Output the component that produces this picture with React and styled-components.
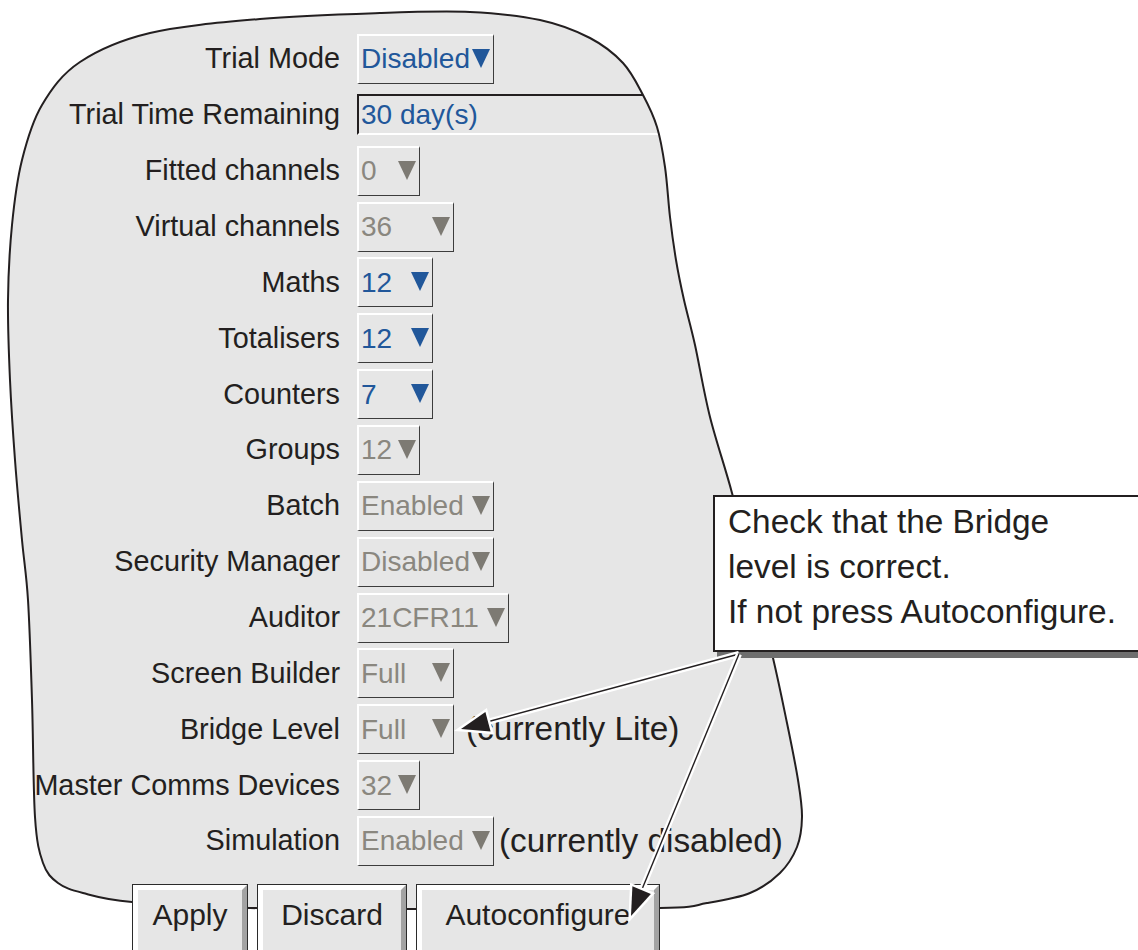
import React from "react";
import styled, { createGlobalStyle } from "styled-components";

const INK = "#231f20";
const BLUE = "#21579a";
const GRAY = "#8a877f";
const GRAY_TRI = "#7d7a73";
const PANEL = "#e6e6e6";

const Global = createGlobalStyle`
  html, body { margin: 0; padding: 0; background: #fff; }
  body { font-family: "Liberation Sans", Arial, Helvetica, sans-serif; color: ${INK}; }
`;

const Page = styled.div`
  position: relative;
  width: 1138px;
  height: 950px;
  overflow: hidden;
  background: #fff;
`;

const Layer = styled.svg`
  position: absolute;
  left: 0;
  top: 0;
  width: 1138px;
  height: 950px;
  pointer-events: none;
  z-index: ${(p) => p.$z};
`;

const Form = styled.div`
  position: relative;
  z-index: 1;
  display: grid;
  grid-template-columns: 340px 1fr;
  grid-auto-rows: 55.86px;
  column-gap: 17px;
  align-items: center;
  padding-top: 31px;
`;

const Label = styled.div`
  text-align: right;
  font-size: 28.8px;
  white-space: nowrap;
  color: ${INK};
`;

const Cell = styled.div`
  display: flex;
  align-items: center;
  height: 100%;
`;

const Select = styled.div`
  box-sizing: border-box;
  width: ${(p) => p.$w}px;
  height: 50px;
  display: flex;
  align-items: center;
  justify-content: space-between;
  padding: 0 3px 0 2px;
  border-top: 2px solid #fff;
  border-left: 2px solid #fff;
  border-right: 1px solid #3c3c3c;
  border-bottom: 1px solid #3c3c3c;
  background: ${PANEL};
  font-size: 28px;
  white-space: nowrap;
  color: ${(p) => (p.$tone === "blue" ? BLUE : GRAY)};
`;

const Arrow = styled.span`
  flex: none;
  width: 0;
  height: 0;
  margin-top: -2px;
  border-left: 9px solid transparent;
  border-right: 9px solid transparent;
  border-top: 19px solid ${(p) => (p.$tone === "blue" ? BLUE : GRAY_TRI)};
`;

const Field = styled.div`
  box-sizing: border-box;
  width: 345px;
  height: 41px;
  display: flex;
  align-items: center;
  padding-left: 2px;
  border-top: 2px solid ${INK};
  border-left: 2px solid ${INK};
  border-bottom: 2px solid #fff;
  background: ${PANEL};
  font-size: 28px;
  color: ${BLUE};
  white-space: nowrap;
`;

const Note = styled.span`
  margin-left: ${(p) => p.$gap}px;
  font-size: 33.4px;
  white-space: nowrap;
  color: ${INK};
`;

const ButtonBar = styled.div`
  position: relative;
  z-index: 3;
  display: flex;
  gap: 11px;
  margin-top: 16px;
  padding-left: 133px;
`;

const Button = styled.div`
  box-sizing: border-box;
  width: ${(p) => p.$w}px;
  height: 72px;
  flex: none;
  display: flex;
  justify-content: center;
  padding-top: 7px;
  border: 5px solid;
  border-color: #fff #a3a3a3 #a3a3a3 #fff;
  outline: 1px solid #2b2b2b;
  background: ${PANEL};
  font-size: 30px;
  line-height: 36px;
  color: ${INK};
`;

const Callout = styled.div`
  position: absolute;
  z-index: 4;
  left: 713px;
  top: 495px;
  width: 440px;
  box-sizing: border-box;
  height: 157px;
  padding: 2px 0 0 13px;
  border: 2px solid ${INK};
  background: #fff;
  box-shadow: 4px 6px 0 #6e6e6e;
  font-size: 33.4px;
  line-height: 45px;
  color: ${INK};
`;

const rows = [
  { label: "Trial Mode", value: "Disabled", w: 137, tone: "blue" },
  { label: "Trial Time Remaining", field: true, value: "30 day(s)" },
  { label: "Fitted channels", value: "0", w: 63, tone: "gray" },
  { label: "Virtual channels", value: "36", w: 97, tone: "gray" },
  { label: "Maths", value: "12", w: 76, tone: "blue" },
  { label: "Totalisers", value: "12", w: 76, tone: "blue" },
  { label: "Counters", value: "7", w: 76, tone: "blue" },
  { label: "Groups", value: "12", w: 63, tone: "gray" },
  { label: "Batch", value: "Enabled", w: 137, tone: "gray" },
  { label: "Security Manager", value: "Disabled", w: 137, tone: "gray" },
  { label: "Auditor", value: "21CFR11", w: 152, tone: "gray" },
  { label: "Screen Builder", value: "Full", w: 97, tone: "gray" },
  { label: "Bridge Level", value: "Full", w: 97, tone: "gray", note: "(currently Lite)", gap: 12 },
  { label: "Master Comms Devices", value: "32", w: 63, tone: "gray" },
  { label: "Simulation", value: "Enabled", w: 137, tone: "gray", note: "(currently disabled)", gap: 5 },
];

const blobPts = [
  [8, 300], [12, 225], [22, 160], [42, 105], [80, 62], [150, 33], [260, 19], [380, 13],
  [470, 12], [540, 20], [590, 38], [623, 63], [643, 95], [657, 127], [665, 167], [670, 217], [676, 260],
  [684, 300], [695, 345], [710, 417], [732, 493], [752, 575], [773, 658], [787, 723],
  [798, 780], [802, 817], [797, 847], [780, 873], [750, 893], [707, 903], [660, 908],
  [450, 909], [250, 908], [132, 902], [83, 893], [58, 883], [43, 863], [35, 817],
  [32, 700], [28, 600], [22, 540], [15, 460], [10, 380],
];

function smoothClosed(pts) {
  const n = pts.length;
  const f = (v) => v.toFixed(1);
  let d = `M${f(pts[0][0])} ${f(pts[0][1])}`;
  for (let i = 0; i < n; i++) {
    const p0 = pts[(i - 1 + n) % n];
    const p1 = pts[i];
    const p2 = pts[(i + 1) % n];
    const p3 = pts[(i + 2) % n];
    const c1 = [p1[0] + (p2[0] - p0[0]) / 6, p1[1] + (p2[1] - p0[1]) / 6];
    const c2 = [p2[0] - (p3[0] - p1[0]) / 6, p2[1] - (p3[1] - p1[1]) / 6];
    d += ` C${f(c1[0])} ${f(c1[1])} ${f(c2[0])} ${f(c2[1])} ${f(p2[0])} ${f(p2[1])}`;
  }
  return d + " Z";
}

const BLOB = smoothClosed(blobPts);

function arrowGeom(start, tip, len, half) {
  const dx = tip[0] - start[0];
  const dy = tip[1] - start[1];
  const L = Math.hypot(dx, dy);
  const ux = dx / L;
  const uy = dy / L;
  const bx = tip[0] - ux * len;
  const by = tip[1] - uy * len;
  const nx = uy;
  const ny = -ux;
  const head = [
    [tip[0], tip[1]],
    [bx + nx * half, by + ny * half],
    [bx - nx * half, by - ny * half],
  ]
    .map((p) => p.map((v) => v.toFixed(1)).join(","))
    .join(" ");
  return { line: [start[0], start[1], bx + ux * 4, by + uy * 4], head };
}

const ARROWS = [
  arrowGeom([739, 654], [461, 729], 28, 10),
  arrowGeom([739, 654], [631, 916], 28, 10),
];

export default function App() {
  return (
    <Page>
      <Global />
      <Layer $z={0} viewBox="0 0 1138 950">
        <path d={BLOB} fill={PANEL} />
      </Layer>

      <Form>
        {rows.map((r) => (
          <React.Fragment key={r.label}>
            <Label>{r.label}</Label>
            <Cell>
              {r.field ? (
                <Field>{r.value}</Field>
              ) : (
                <Select $w={r.w} $tone={r.tone}>
                  <span>{r.value}</span>
                  <Arrow $tone={r.tone} />
                </Select>
              )}
              {r.note && <Note $gap={r.gap}>{r.note}</Note>}
            </Cell>
          </React.Fragment>
        ))}
      </Form>

      <Layer $z={2} viewBox="0 0 1138 950">
        <path d={`M0 0 H1138 V950 H0 Z ${BLOB}`} fill="#fff" fillRule="evenodd" />
        <path d={BLOB} fill="none" stroke={INK} strokeWidth="2" />
      </Layer>

      <ButtonBar>
        <Button $w={114}>Apply</Button>
        <Button $w={148}>Discard</Button>
        <Button $w={242}>Autoconfigure</Button>
      </ButtonBar>

      <Callout>
        Check that the Bridge
        <br />
        level is correct.
        <br />
        If not press Autoconfigure.
      </Callout>

      <Layer $z={5} viewBox="0 0 1138 950">
        {ARROWS.map((a, i) => (
          <g key={i}>
            <line x1={a.line[0]} y1={a.line[1]} x2={a.line[2]} y2={a.line[3]} stroke="#fff" strokeWidth="6" />
            <line x1={a.line[0]} y1={a.line[1]} x2={a.line[2]} y2={a.line[3]} stroke={INK} strokeWidth="1.4" />
            <polygon points={a.head} fill={INK} stroke="#fff" strokeWidth="5" strokeLinejoin="miter" strokeMiterlimit="10" paintOrder="stroke" />
          </g>
        ))}
      </Layer>
    </Page>
  );
}
